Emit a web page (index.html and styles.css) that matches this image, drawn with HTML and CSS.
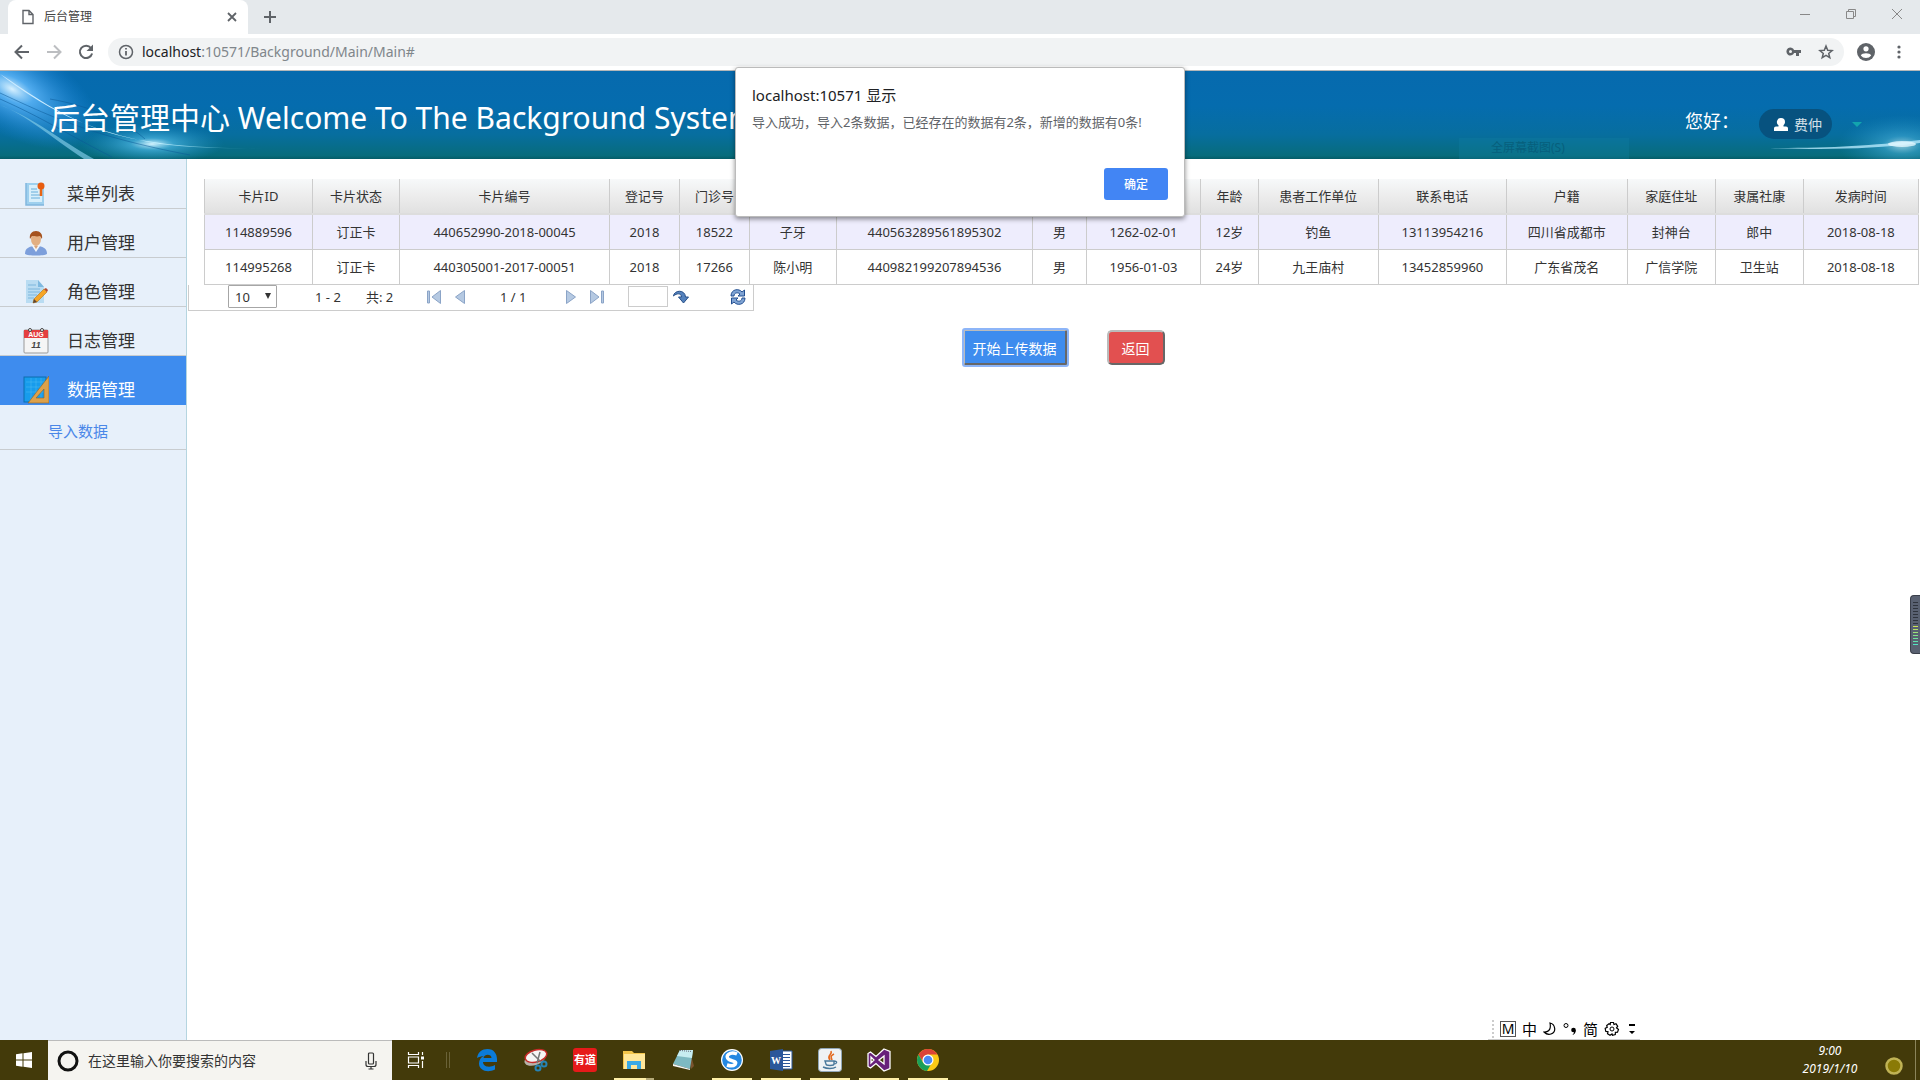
FILE: index.html
```html
<!DOCTYPE html>
<html lang="zh-CN">
<head>
<meta charset="utf-8">
<title>后台管理</title>
<link rel="stylesheet" href="styles.css">
</head>
<body>
<div class="tabstrip">
  <div class="tab">
    <svg class="tab-file" width="12" height="16" viewBox="0 0 12 16" fill="none" stroke="#5f6368" stroke-width="1.4"><path d="M1 1.5h6l4 4v9H1zM7 1.5v4h4"/></svg>
    <span class="tab-title">后台管理</span>
    <button class="bare" aria-label="关闭标签页"><svg width="10" height="10" viewBox="0 0 10 10" stroke="#5f6368" stroke-width="1.8"><path d="M1 1l8 8M9 1L1 9"/></svg></button>
  </div>
  <button class="bare newtab" aria-label="新标签页"><svg width="12" height="12" viewBox="0 0 12 12" stroke="#5f6368" stroke-width="2"><path d="M6 0v12M0 6h12"/></svg></button>
  <div class="window-controls">
    <button class="bare" aria-label="最小化"><svg width="12" height="12" viewBox="0 0 12 12" stroke="#888"><path d="M1 6.500h10"/></svg></button>
    <button class="bare" aria-label="还原"><svg width="12" height="12" viewBox="0 0 12 12" fill="none" stroke="#888"><path d="M1.500 3.500h7v7h-7zM3.500 3.500v-2h7v7h-2"/></svg></button>
    <button class="bare" aria-label="关闭"><svg width="12" height="12" viewBox="0 0 12 12" stroke="#888"><path d="M1 1l10 10M11 1L1 11"/></svg></button>
  </div>
</div>
<div class="toolbar">
  <button class="bare" aria-label="后退"><svg width="16" height="16" viewBox="0 0 16 16" fill="none" stroke="#5f6368" stroke-width="2"><path d="M15 8H2M8 1.500L1.500 8L8 14.500"/></svg></button>
  <button class="bare" aria-label="前进"><svg width="16" height="16" viewBox="0 0 16 16" fill="none" stroke="#bcbec1" stroke-width="2"><path d="M1 8h13M8 1.500L14.500 8L8 14.500"/></svg></button>
  <button class="bare" aria-label="重新加载"><svg width="16" height="16" viewBox="0 0 16 16"><path d="M13 4A6.200 6.200 0 1 0 14.100 9.500" fill="none" stroke="#5f6368" stroke-width="2"/><path d="M15 .5V7H8.500z" fill="#5f6368"/></svg></button>
  <div class="omnibox">
    <svg width="16" height="16" viewBox="0 0 16 16"><circle cx="8" cy="8" r="6.500" fill="none" stroke="#5f6368" stroke-width="1.500"/><path d="M8 7v4.500M8 4v1.600" stroke="#5f6368" stroke-width="1.800"/></svg>
    <span class="url"><b>localhost</b>:10571/Background/Main/Main#</span>
    <svg width="16" height="16" viewBox="0 0 16 16"><path fill="#5f6368" fill-rule="evenodd" d="M8.100 6A4 4 0 1 0 8.100 9H10v3h3V9h2V6zM4.500 6a1.500 1.500 0 1 1 0 3 1.500 1.500 0 0 1 0-3z"/></svg>
    <svg class="star" width="16" height="16" viewBox="0 0 16 16" fill="none" stroke="#5f6368" stroke-width="1.500"><path d="M8 2l1.700 4.200 4.400.3-3.400 2.900 1.100 4.300L8 11.400l-3.800 2.300 1.100-4.300L1.900 6.500l4.400-.3z"/></svg>
  </div>
  <button class="bare" aria-label="用户"><svg width="18" height="18" viewBox="0 0 18 18"><circle cx="9" cy="9" r="9" fill="#5f6368"/><circle cx="9" cy="5.800" r="2.600" fill="#fff"/><path d="M3.800 12.500c1-3 9.400-3 10.400 0a6.500 6.500 0 0 1-10.400 0z" fill="#fff"/></svg></button>
  <button class="bare" aria-label="菜单"><svg width="16" height="16" viewBox="0 0 16 16" fill="#5f6368"><circle cx="8" cy="3" r="1.600"/><circle cx="8" cy="8" r="1.600"/><circle cx="8" cy="13" r="1.600"/></svg></button>
</div>

<header class="banner">
  <svg class="glow glow-left" width="280" height="88" viewBox="0 0 280 88">
    <defs>
      <radialGradient id="g1"><stop offset="0" stop-color="#d8f1ff"/><stop offset=".25" stop-color="#58b2f5" stop-opacity=".9"/><stop offset="1" stop-color="#1d86dc" stop-opacity="0"/></radialGradient>
      <radialGradient id="g2"><stop offset="0" stop-color="#d5f4ff"/><stop offset=".3" stop-color="#4ab5e2" stop-opacity=".7"/><stop offset="1" stop-color="#2090c8" stop-opacity="0"/></radialGradient>
      <linearGradient id="g3"><stop offset="0" stop-color="#cdeaff"/><stop offset=".6" stop-color="#bff0ff"/><stop offset="1" stop-color="#40b0c8" stop-opacity="0"/></linearGradient>
    </defs>
    <ellipse cx="12" cy="18" rx="95" ry="46" fill="url(#g1)" transform="rotate(28 12 18)"/>
    <ellipse cx="152" cy="73" rx="72" ry="20" fill="url(#g2)"/>
    <path d="M0 3C42 35 84 60 160 73C195 77 225 78 265 77C210 78 150 74 110 62C60 46 30 22 0 3z" fill="url(#g3)"/>
    <path d="M0 34C36 48 58 68 94 88H84C52 67 25 43 0 34z" fill="#7cc7e4" opacity=".7"/>
    <path d="M0 22C50 45 90 65 190 84M0 28C45 48 65 62 112 86M50 28C90 35 125 50 145 68" fill="none" stroke="#0a5795" opacity=".5"/>
  </svg>
  <svg class="glow glow-right" width="180" height="88" viewBox="0 0 180 88">
    <ellipse cx="162" cy="74" rx="64" ry="30" fill="url(#g2)" opacity=".7"/>
    <path d="M30 77C90 77 130 75 180 69V72C130 78 90 79 30 77z" fill="#b5e9fb" opacity=".8"/>
    <ellipse cx="162" cy="73" rx="14" ry="3" fill="#e2f8ff" opacity=".8"/>
  </svg>
  <h1>后台管理中心 Welcome To The Background System</h1>
  <div class="capture-hint">全屏幕截图(S)</div>
  <span class="hello">您好：</span>
  <button class="user"><svg width="14" height="14" viewBox="0 0 14 14" fill="#fff"><path d="M7 1a4 4 0 0 1 4 4c0 1.300-.6 2.400-1.500 3.200V9.500H12c1.200 0 2 .8 2 2V14H0v-2.500c0-1.200.8-2 2-2h2.500V8.200A4 4 0 0 1 7 1z"/></svg>费仲</button>
  <span class="caret"></span>
</header>

<div class="workspace">
  <nav class="sidebar">
    <a href="#" class="item"><svg width="26" height="26" viewBox="0 0 26 26"><path d="M3 2h18v22H3z" fill="#9ed0ee"/><path d="M6 4h13v17H6z" fill="#d8effb"/><path d="M8 8h6M8 11h7M8 14h9M8 17h9" stroke="#68aeda"/><path d="M3 2v22h18" fill="none" stroke="#82b7de" stroke-width="1.500"/><circle cx="18" cy="5" r="3.500" fill="#e85d10"/><path d="M18 8v7" stroke="#e96514" stroke-width="2.500"/></svg>菜单列表</a>
    <a href="#" class="item"><svg width="26" height="26" viewBox="0 0 26 26"><path d="M2 24c0-6 4-7 8-8h6c5 1 8 3 8 8-3 2-19 2-22 0z" fill="#7d9fdb"/><path d="M9 16l4 6 4-6-1-3h-6z" fill="#f3f5f8"/><ellipse cx="13" cy="9" rx="5" ry="7" fill="#e3af82"/><path d="M7 9C6 4 9 1 13 1s7 3 6 8l-2-3c-3 1-6 0-8 0z" fill="#a5521e"/><path d="M11 16h4l-2 3z" fill="#dba478"/></svg>用户管理</a>
    <a href="#" class="item"><svg width="26" height="26" viewBox="0 0 26 26"><path d="M3 1h12l6 7v16H3z" fill="#b9dcf2"/><path d="M15 1v7h6z" fill="#7fb9df"/><path d="M5 6h8M5 10h12M5 13h12M5 16h9M5 19h6" stroke="#7cb6dc"/><path d="M11 20L21 10l3 3-10 10-4 1z" fill="#f6a526" stroke="#b6731a" stroke-width=".6"/><path d="M21 10l3 3 1-2-2-2z" fill="#b34b31"/><path d="M10 24l1-4 3 3z" fill="#5b4637"/></svg>角色管理</a>
    <a href="#" class="item"><svg width="26" height="26" viewBox="0 0 26 26"><rect x="1" y="2" width="24" height="23" rx="1" fill="#f5f5f5" stroke="#999"/><path d="M1 2h24v8H1z" fill="#e43f3f"/><circle cx="7" cy="2" r="1.500" fill="#fff" stroke="#444"/><circle cx="19" cy="2" r="1.500" fill="#fff" stroke="#444"/><text x="13" y="9" class="cal-month">AUG</text><text x="13" y="20" class="cal-day">11</text></svg>日志管理</a>
    <a href="#" class="item active"><svg width="26" height="28" viewBox="0 0 26 28"><rect x="1" y="1" width="22" height="25" fill="#179cec" stroke="#0c6dae"/><path d="M3 6h19M3 11h19M3 16h19M8 2v23M13 2v23M18 2v23" stroke="#5dc0f4" stroke-width=".4"/><path fill-rule="evenodd" d="M26 0v27H5zM21 13v9h-8z" fill="#dda14a" stroke="#8d6327" stroke-width=".6"/></svg>数据管理</a>
    <a href="#" class="subitem">导入数据</a>
  </nav>
  <main class="content">
    <table class="grid">
      <colgroup><col style="width:6.300%"><col style="width:5.080%"><col style="width:12.250%"><col style="width:4.080%"><col style="width:4.080%"><col style="width:5.080%"><col style="width:11.440%"><col style="width:3.150%"><col style="width:6.650%"><col style="width:3.380%"><col style="width:7%"><col style="width:7.470%"><col style="width:7.060%"><col style="width:5.130%"><col style="width:5.130%"><col style="width:6.720%"></colgroup>
      <thead><tr><th>卡片ID</th><th>卡片状态</th><th>卡片编号</th><th>登记号</th><th>门诊号</th><th></th><th></th><th></th><th></th><th>年龄</th><th>患者工作单位</th><th>联系电话</th><th>户籍</th><th>家庭住址</th><th>隶属社康</th><th>发病时间</th></tr></thead>
      <tbody>
        <tr><td>114889596</td><td>订正卡</td><td>440652990-2018-00045</td><td>2018</td><td>18522</td><td>子牙</td><td>440563289561895302</td><td>男</td><td>1262-02-01</td><td>12岁</td><td>钓鱼</td><td>13113954216</td><td>四川省成都市</td><td>封神台</td><td>郎中</td><td>2018-08-18</td></tr>
        <tr><td>114995268</td><td>订正卡</td><td>440305001-2017-00051</td><td>2018</td><td>17266</td><td>陈小明</td><td>440982199207894536</td><td>男</td><td>1956-01-03</td><td>24岁</td><td>九王庙村</td><td>13452859960</td><td>广东省茂名</td><td>广信学院</td><td>卫生站</td><td>2018-08-18</td></tr>
      </tbody>
    </table>
    <div class="pager">
      <div class="select-wrap"><select aria-label="每页条数"><option>10</option></select></div>
      <span class="range">1 - 2</span>
      <span class="total">共: 2</span>
      <button class="bare" aria-label="首页"><svg width="16" height="16" viewBox="0 0 16 16" fill="#b5c9e2" stroke="#8ba4c7"><path d="M14.500 1.500v13L6 8zM1.500 2v12h2V2z"/></svg></button>
      <button class="bare" aria-label="上一页"><svg width="16" height="16" viewBox="0 0 16 16" fill="#b5c9e2" stroke="#8ba4c7"><path d="M12.500 1.500v13L3.500 8z"/></svg></button>
      <span class="pages">1 / 1</span>
      <button class="bare" aria-label="下一页"><svg width="16" height="16" viewBox="0 0 16 16" fill="#b5c9e2" stroke="#8ba4c7"><path d="M3.500 1.500v13l9-6.500z"/></svg></button>
      <button class="bare" aria-label="末页"><svg width="16" height="16" viewBox="0 0 16 16" fill="#b5c9e2" stroke="#8ba4c7"><path d="M1.500 1.500v13L10 8zM12.500 2v12h2V2z"/></svg></button>
      <input class="goto" type="text" aria-label="页码">
      <button class="bare" aria-label="跳转"><svg width="16" height="16" viewBox="0 0 16 16"><path d="M.5 7C1 1 12 0 12.500 8H15.500L10.500 14L5.500 8H8.500C8.500 4 3.500 4 .5 7z" fill="#5482bd" stroke="#274f88"/></svg></button>
      <button class="bare refresh" aria-label="刷新"><svg width="16" height="16" viewBox="0 0 16 16" fill="#7fa3d3" stroke="#234f91"><path d="M1 7C1 0 9-1 12 3l2.500-2V7H8l2-2C8 3 4 3.500 4 7zM15 9c0 7-8 8-11 4l-2.500 2V9H8l-2 2c2 2 6 1.500 6-2z"/></svg></button>
    </div>
    <div class="actions">
      <button class="upload">开始上传数据</button>
      <button class="back">返回</button>
    </div>
    <div class="side-meter"><i></i></div>
    <div class="ime">
      <span class="grip"></span><span class="ime-m">M</span><span>中</span>
      <svg width="14" height="14" viewBox="0 0 14 14" fill="none" stroke="#000" stroke-width="1.200"><path d="M7 1c5 1 7 9 1 11-3 1-5 0-7-2 6 0 7-4 6-9z"/></svg>
      <svg width="14" height="14" viewBox="0 0 14 14"><circle cx="3" cy="3.500" r="2" fill="none" stroke="#000"/><circle cx="10.500" cy="8" r="2.300"/><path d="M12.800 8c0 3-1.500 4.500-3.500 5 1.500-1.500 2-2.500 1.500-4z"/></svg>
      <span>简</span>
      <svg width="16" height="16" viewBox="0 0 16 16" fill="none" stroke="#000"><path stroke-width="1.200" d="M6.500 1.500h3l.5 2 2-.7 1.700 2.400-1.200 1.600 2 1.700-1 2.700-2.100.1-.1 2.200-2.800.8L8 13l-2 1.300-2.500-1.500.5-2-2.300-.5-.5-3 2-.9-.5-2L5 2.800l1.200.7z"/><circle cx="8" cy="8" r="2"/></svg>
      <svg class="ime-more" width="6" height="12" viewBox="0 0 6 12"><path d="M0 1h6v2H0zM0 8h6L3 11z"/></svg>
    </div>
  </main>
</div>

<footer class="taskbar">
  <button class="bare start" aria-label="开始"><svg width="16" height="16" viewBox="0 0 16 16" fill="#fff"><path d="M0 2.300L6.500 1.300V7.500H0zM7.500 1.200L16 0v7.500H7.500zM0 8.500h6.500v6.200L0 13.800zM7.500 8.500H16V16l-8.500-1.200z"/></svg></button>
  <div class="search">
    <svg width="22" height="22" viewBox="0 0 22 22"><circle cx="11" cy="11" r="9" fill="none" stroke="#111" stroke-width="3"/></svg>
    <input type="text" aria-label="搜索" placeholder="在这里输入你要搜索的内容">
    <svg width="12" height="18" viewBox="0 0 12 18" fill="none" stroke="#333" stroke-width="1.200"><rect x="3.500" y="1" width="5" height="11" rx="1"/><path d="M1 9v3.500q0 2 2 2h6q2 0 2-2V9M6 14.500V17M3.500 17h5"/></svg>
  </div>
  <button class="bare taskview" aria-label="任务视图"><svg width="18" height="16" viewBox="0 0 18 16" fill="none" stroke="#fff" stroke-width="1.200"><path d="M1.500 0v2.500h10V0M1.500 5h10v6h-10zM1.500 16v-2.500h10V16M15.500 0v3M15.500 9v7"/><path d="M14 4.500h3v3h-3z" fill="#fff" stroke="none"/></svg></button>
  <span class="divider"></span>
  <div class="apps">
    <button class="bare app" aria-label="Edge"><svg width="24" height="24" viewBox="0 0 24 24"><path fill="#0b7bd8" d="M2 10C3 4 7 1 12.500 1 19 1 22 6 22 11v3H8c0 5 7 6 12 3v4.500C12 25.500 4 22 4 15.500 4 12 6 9 9 8c-3 0-5 1-7 2zM8.500 10h8c0-4-7-4.500-8 0z"/></svg></button>
    <button class="bare app" aria-label="截图工具"><svg width="24" height="24" viewBox="0 0 24 24"><ellipse cx="11" cy="11" rx="11" ry="6" fill="#b8b2aa" transform="rotate(-20 11 11)"/><ellipse cx="12" cy="8" rx="11" ry="6" fill="#f5f5f5" stroke="#c72b29" stroke-width="1.500" transform="rotate(-15 12 8)"/><path d="M8 5l9 9M16 4l-3 11" stroke="#777" stroke-width="1.500"/><circle cx="14" cy="20" r="2.500" fill="none" stroke="#2683b5" stroke-width="2"/><circle cx="20" cy="16" r="2.500" fill="none" stroke="#2683b5" stroke-width="2"/></svg></button>
    <button class="bare app youdao"><span>有道</span></button>
    <button class="bare app running grouped" aria-label="文件资源管理器"><svg width="24" height="24" viewBox="0 0 24 24"><path d="M1 3h9l2 2h11v16H1z" fill="#f3c64c"/><path d="M2 6h21v15H2z" fill="#ffe79a"/><path d="M5 13h14v8h-4v-4h-6v4H5z" fill="#39a9e6"/></svg></button>
    <button class="bare app" aria-label="记事本"><svg width="24" height="24" viewBox="0 0 24 24"><path d="M19 4l4 14-3 3z" fill="#7a532e"/><path d="M9 2h13l-3 19L2 16z" fill="#7db9c2"/><path d="M9 2h13l-1 8L6 8z" fill="#c7edf1"/><path d="M2 16l17 5v1L2 18z" fill="#f7f7f7"/><path d="M9 2.500l12 1" stroke="#667" stroke-dasharray="1 1"/></svg></button>
    <button class="bare app running" aria-label="搜狗浏览器"><svg width="24" height="24" viewBox="0 0 24 24"><circle cx="12" cy="12" r="11" fill="#fff"/><circle cx="12" cy="12" r="9.800" fill="#2488e2"/><path d="M17 6C10 3 4 8 9 11.500c3 2 8.500 1.500 6 5-2 2-5 1.500-8 .5" fill="none" stroke="#fff" stroke-width="3.500"/></svg></button>
    <button class="bare app running" aria-label="Word"><svg width="24" height="24" viewBox="0 0 24 24"><path d="M12 3h11v18H12z" fill="#fff" stroke="#2b579a"/><path d="M14 6.500h7M14 9.500h7M14 12.500h7M14 15.500h7M14 18.500h7" stroke="#2b579a"/><path d="M1 3l13-2v22L1 21z" fill="#2b579a"/><text x="7" y="16" class="word-w">W</text></svg></button>
    <button class="bare app running" aria-label="Java"><svg width="24" height="24" viewBox="0 0 24 24"><rect x=".5" y=".5" width="23" height="23" rx="3" fill="#eff2f4" stroke="#91a7b8"/><path d="M13 3c2 4-5 4-1 9M16 6c-4 2-3 3-2 6" fill="none" stroke="#e36a20" stroke-width="1.600"/><path d="M7 13h9v3c0 2-8 2-8 0zM16 13c4 0 3 3 0 3M5 19c4 2 10 2 13 0" fill="none" stroke="#49789b" stroke-width="1.400"/></svg></button>
    <button class="bare app running" aria-label="Visual Studio"><svg width="24" height="24" viewBox="0 0 24 24"><path fill="#68217a" fill-rule="evenodd" stroke="#fff" stroke-width="1.300" d="M17 1l6 2.500v17L17 23l-8-7.500L3.500 20 1 18.500v-13L3.500 4 9 8.500zM17 8l-5 4 5 4zM4 9v6l3-3z"/></svg></button>
    <button class="bare app running" aria-label="Chrome"><svg width="24" height="24" viewBox="0 0 24 24"><circle cx="12" cy="12" r="11" fill="#fbc916"/><path d="M2.500 6.500A11 11 0 0 1 21.500 6.500H12a5.500 5.500 0 0 0-5 7.500z" fill="#dc4437"/><path d="M2.500 6.500A11 11 0 0 0 11 23l5-8.500a5.500 5.500 0 0 1-9 0z" fill="#1b9f59"/><circle cx="12" cy="12" r="5.500" fill="#fff"/><circle cx="12" cy="12" r="4.300" fill="#4a8af4"/></svg></button>
  </div>
  <div class="clock"><span>9:00</span><span>2019/1/10</span></div>
  <svg class="notice" width="20" height="20" viewBox="0 0 20 20"><circle cx="10" cy="10" r="7.500" fill="#8a7a06" stroke="#c0b355" stroke-width="2.500"/></svg>
  <span class="show-desktop"></span>
</footer>

<div class="dialog" role="dialog" aria-labelledby="dlg-title">
  <h2 id="dlg-title">localhost:10571 显示</h2>
  <p>导入成功，导入2条数据，已经存在的数据有2条，新增的数据有0条!</p>
  <button class="ok">确定</button>
</div>
</body>
</html>
```
FILE: styles.css
```css
* { box-sizing: border-box; }

body {
  position: relative;
  display: flex;
  flex-direction: column;
  min-height: 100vh;
  margin: 0;
  background: #fff;
  color: #333;
  font-family: "Noto Sans", "Noto Sans CJK SC", sans-serif;
  font-size: 13px;
  line-height: 20px;
}

button, input, select { font-family: inherit; }
a { text-decoration: none; }
svg { display: block; flex: none; }

.bare {
  display: flex;
  align-items: center;
  justify-content: center;
  padding: 0;
  border: 0;
  background: none;
}

/* Browser frame */
.tabstrip {
  display: flex;
  height: 34px;
  padding-left: 8px;
  background: #e5e9ec;
}
.tab {
  display: flex;
  align-items: center;
  width: 240px;
  padding: 0 11px 0 14px;
  border-radius: 8px 8px 0 0;
  background: #fff;
}
.tab-title { flex: 1; padding-left: 10px; font-size: 12px; color: #444; }
.newtab { width: 44px; }
.window-controls { display: flex; height: 28px; margin-left: auto; }
.window-controls .bare { width: 46px; }

.toolbar {
  display: flex;
  align-items: center;
  gap: 16px;
  height: 37px;
  padding: 0 13px 0 14px;
  border-bottom: 1px solid #b4b7b9;
}
.omnibox {
  display: flex;
  flex: 1;
  align-items: center;
  gap: 16px;
  height: 28px;
  margin: 0 -3px 0 -2px;
  padding: 0 10px;
  border-radius: 14px;
  background: #f1f3f4;
}
.url { flex: 1; margin-left: -8px; font-size: 14px; color: #80868b; }
.url b { font-weight: 400; color: #202124; }

/* Page banner */
.banner {
  position: relative;
  display: flex;
  align-items: center;
  height: 88px;
  padding: 6px 58px 0 50px;
  background: linear-gradient(#066aae, #056cae 40%, #076e9f 72%, #076c7c 96%, #045c68);
  color: #fff;
}
.glow { position: absolute; top: 0; }
.glow-left { left: 0; }
.glow-right { right: 0; }
.banner h1 {
  position: relative;
  margin: 0;
  font-size: 30px;
  font-weight: 400;
  line-height: 40px;
  white-space: nowrap;
}
.capture-hint {
  position: absolute;
  right: 291px;
  bottom: 0;
  width: 170px;
  height: 21px;
  padding-left: 32px;
  background: rgba(20, 130, 165, .3);
  color: #075f7c;
  font-size: 12px;
}
.hello { margin-left: auto; padding-top: 6px; font-size: 18px; }
.user {
  position: relative;
  display: flex;
  align-items: center;
  gap: 6px;
  height: 30px;
  margin: 12px 20px 0 20px;
  padding: 0 10px 0 15px;
  border: 0;
  border-radius: 15px;
  background: #07527f;
  color: #d3e0e8;
  font-size: 14px;
}
.caret {
  position: relative;
  border: 5px solid transparent;
  border-top-color: #12a5ae;
  border-bottom: 0;
  margin-top: 12px;
}

/* Sidebar */
.workspace { display: flex; flex: 1; }
.sidebar {
  width: 187px;
  padding-top: 1px;
  border-right: 1px solid #b5d5e0;
  background: #e7f0fa;
}
.item {
  display: flex;
  align-items: center;
  gap: 18px;
  height: 49px;
  padding: 20px 0 0 23px;
  border-bottom: 1px solid #c8cccf;
  color: #333;
  font-size: 17px;
}
.item.active { border-color: #3e8cee; background: #3e8cee; color: #fff; }
.subitem {
  display: block;
  padding: 16px 48px 8px;
  border-bottom: 1px solid #c8cccf;
  color: #4a87e8;
  font-size: 15px;
}
.cal-month { fill: #fff; font: bold 7px "Liberation Sans", sans-serif; text-anchor: middle; }
.cal-day { fill: #444; font: italic bold 9px "Liberation Sans", sans-serif; text-anchor: middle; }

/* Content */
.content { position: relative; flex: 1; min-width: 0; padding: 20px 0 0 1px; }
.grid {
  width: calc(100% - 17px);
  margin-left: 16px;
  border-collapse: collapse;
  table-layout: fixed;
  text-align: center;
  white-space: nowrap;
}
.grid th, .grid td { height: 35px; padding: 0; border: 1px solid #ccc; }
.grid th {
  border-top: 0;
  border-bottom: 2px solid #ddd;
  font-weight: 400;
}
.grid thead tr { background: linear-gradient(#f7f9fa, #ececec 50%, #e0e0e0); }
.grid tbody tr:first-child { background: #eeedfd; }

.pager {
  display: flex;
  align-items: center;
  width: 566px;
  height: 26px;
  padding: 0 7px 1px 39px;
  border: 1px solid #ccc;
  border-top: 0;
}
.select-wrap { position: relative; margin-right: 38px; }
.select-wrap::after {
  position: absolute;
  top: 8px;
  right: 6px;
  border: 3px solid transparent;
  border-top: 6px solid #333;
  border-bottom: 0;
  content: "";
}
.pager select {
  display: block;
  width: 49px;
  height: 23px;
  padding: 0 6px;
  border: 1px solid #a6a6a6;
  border-radius: 1px;
  appearance: none;
  background: #fff;
  color: #333;
  font-size: 13px;
}
.range { width: 51px; }
.total { width: 60px; }
.pager .bare { margin-right: 10px; }
.pages { width: 85px; padding-left: 22px; }
.goto {
  width: 40px;
  height: 21px;
  margin: 0 5px 0 13px;
  border: 1px solid #ccc;
}
.pager .refresh { margin: 0 0 0 auto; }

.actions {
  display: flex;
  align-items: center;
  justify-content: center;
  gap: 40px;
  padding: 19px 0 0 20px;
}
.actions button {
  height: 35px;
  padding: 2px 8px 0;
  border: 2px outset #bbb;
  color: #fff;
  font-size: 14px;
}
.actions .upload { border-width: 1px 2px 2px 1px; background: #3e8cee; outline: 2px solid #8db5f8; border-radius: 1px; }
.actions .back { padding: 2px 13px 0; border-radius: 5px; background: #e25050; }

.side-meter {
  position: absolute;
  top: 436px;
  right: 0;
  width: 10px;
  height: 59px;
  padding: 6px 2px;
  border: 1px solid #3a3f4a;
  border-right: 0;
  border-radius: 4px 0 0 4px;
  background: #596171;
}
.side-meter i {
  display: block;
  height: 45px;
  background:
    repeating-linear-gradient(transparent 0 1px, #596171 1px 3px),
    linear-gradient(#2f343d 52%, #d6e34f 52%, #7fe48a 75%, #42e4d0);
}

.ime {
  position: absolute;
  right: 280px;
  bottom: 0;
  display: flex;
  align-items: center;
  gap: 6px;
  width: 152px;
  height: 22px;
  padding-left: 4px;
  border-bottom: 1px solid #ccc;
  background: #fff;
  color: #000;
  font-size: 15px;
}
.grip { height: 18px; border-left: 2px dotted #ccc; }
.ime-m { width: 16px; border: 1px solid #555; font-size: 14px; line-height: 14px; text-align: center; }
.ime-more { margin-left: 3px; }

/* Taskbar */
.taskbar {
  display: flex;
  align-items: stretch;
  height: 40px;
  background: #433a0a;
}
.start { width: 48px; }
.search {
  display: flex;
  align-items: center;
  gap: 9px;
  width: 344px;
  padding: 0 15px 0 9px;
  border-top: 1px solid #bbb;
  background: #f5f4f0;
}
.search input {
  flex: 1;
  min-width: 0;
  padding: 0;
  border: 0;
  background: none;
  font-size: 14px;
}
.search input::placeholder { color: #333; opacity: 1; }
.taskview { width: 48px; }
.divider {
  align-self: center;
  width: 4px;
  height: 16px;
  margin: 0 17px 0 6px;
  border: solid #6a6238;
  border-width: 0 1px;
}
.apps { display: flex; gap: 9px; }
.app { width: 40px; border-bottom: 2px solid transparent; padding-top: 2px; }
.running { border-color: #fff0a8; }
.grouped { border-image: linear-gradient(90deg, #fff0a8 78%, #b5aa78 78%) 2; border-width: 0 0 2px; }
.youdao span {
  width: 24px;
  border-radius: 3px;
  background: #e61a1a;
  color: #fff;
  font-size: 11px;
  font-weight: 700;
  line-height: 24px;
}
.word-w { fill: #fff; font: bold 10px "Liberation Serif", serif; text-anchor: middle; }
.clock {
  display: flex;
  flex-direction: column;
  align-items: center;
  width: 60px;
  margin-left: auto;
  padding-top: 2px;
  color: #fff;
  font-size: 12px;
  font-style: italic;
  line-height: 18px;
}
.notice { align-self: center; margin: 12px 11px 0 24px; }
.show-desktop { width: 5px; border-left: 1px solid #8b845a; }

/* Alert */
.dialog {
  position: absolute;
  top: 67px;
  left: 0;
  right: 0;
  display: flex;
  flex-direction: column;
  width: 450px;
  margin: 0 auto;
  padding: 17px 16px 16px;
  border: 1px solid #bbb;
  border-radius: 3px;
  background: #fff;
  box-shadow: 0 2px 5px rgba(0, 0, 0, .45);
}
.dialog h2 { margin: 0; color: #202124; font-size: 15px; font-weight: 400; }
.dialog p { margin: 7px 0 36px; color: #5f6368; }
.ok {
  align-self: flex-end;
  width: 64px;
  height: 32px;
  border: 0;
  border-radius: 3px;
  background: #4285f4;
  color: #fff;
  font-size: 12px;
  font-weight: 500;
}
```
